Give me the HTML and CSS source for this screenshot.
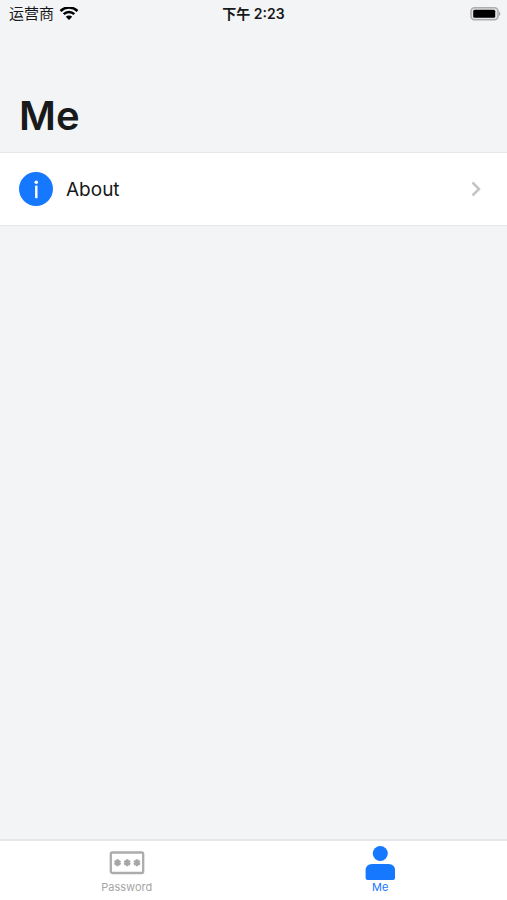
FILE: index.html
```html
<!DOCTYPE html>
<html lang="en">
<head>
<meta charset="utf-8">
<meta name="viewport" content="width=device-width, initial-scale=1">
<title>Me</title>
<link rel="stylesheet" href="styles.css">
</head>
<body>
<div class="app">
  <header class="status">
    <div class="carrier">
      <span lang="zh">运营商</span>
      <svg class="wifi" width="20" height="14" viewBox="0 0 20 14" aria-hidden="true">
        <path d="M1.5 4a12.2 12.2 0 0 1 17 0M4.7 7.2a7.6 7.6 0 0 1 10.6 0" fill="none" stroke="#000" stroke-width="2.5"/>
        <path d="M10 13 6.8 9.8a4.6 4.6 0 0 1 6.4 0z"/>
      </svg>
    </div>
    <time class="clock" lang="zh">下午 2:23</time>
    <svg class="battery" width="32" height="14" viewBox="0 0 32 14" aria-hidden="true">
      <rect x="1" y="0.800" width="27" height="12" rx="3.5" fill="#e4e4e5" stroke="#adadae" stroke-width="1.5"/>
      <rect x="3.200" y="2.800" width="22" height="8" rx="1.5"/>
      <path d="M29 4.300q2.500 2.500 0 5z" fill="#a2a2a3"/>
    </svg>
  </header>
  <main class="content">
    <h1 class="title">Me</h1>
    <a class="row" href="#about">
      <svg class="info" width="34" height="34" viewBox="0 0 34 34" aria-hidden="true">
        <circle cx="17" cy="17" r="17" fill="#1677ff"/>
        <circle cx="17.3" cy="10.3" r="1.8" fill="#fff"/>
        <path d="M17.3 13.6v12.600" stroke="#fff" stroke-width="2.4"/>
      </svg>
      <span class="label">About</span>
      <svg class="chevron" width="10" height="16" viewBox="0 0 10 16" aria-hidden="true">
        <path d="M1.5 1.5 8 8l-6.5 6.5" fill="none" stroke="#c4c4c6" stroke-width="2.5"/>
      </svg>
    </a>
  </main>
  <nav class="tabs">
    <a class="tab" href="#password">
      <svg width="36" height="36" viewBox="0 0 36 36" aria-hidden="true">
        <rect x="1.8" y="8.5" width="32.4" height="20.5" rx="1.5" fill="none" stroke="#acacac" stroke-width="2.3"/>
        <g stroke="#a6a6a6" stroke-width="2.5">
          <path id="star" d="M8.5 15.3v7M5.5 17l6 3.5M5.5 20.5l6-3.500"/>
          <use href="#star" x="9.7"/>
          <use href="#star" x="19.4"/>
        </g>
      </svg>
      <span>Password</span>
    </a>
    <a class="tab active" href="#me" aria-current="page">
      <svg width="36" height="36" viewBox="0 0 36 36" aria-hidden="true">
        <circle cx="18.3" cy="9.500" r="7.500"/>
        <path d="M3.6 34v-7.500q0-6.500 6.500-6.500h16.400q6.500 0 6.500 6.500V34q0 2-2 2H5.600q-2 0-2-2z"/>
      </svg>
      <span>Me</span>
    </a>
  </nav>
</div>
</body>
</html>
```
FILE: styles.css
```css
* {
  box-sizing: border-box;
}

body {
  margin: 0;
  background: #f3f4f6;
  color: #18191a;
  font-family: Inter, "Noto Sans CJK SC", sans-serif;
}

a {
  color: inherit;
  text-decoration: none;
}

svg {
  display: block;
  flex-shrink: 0;
}

.app {
  display: flex;
  flex-direction: column;
  min-height: 100vh;
}

.status {
  display: grid;
  grid-template-columns: 1fr auto 1fr;
  align-items: center;
  height: 28px;
  padding: 0 5px;
  font-size: 15px;
  line-height: 20px;
}

.carrier {
  display: flex;
  align-items: center;
  gap: 5px;
  padding-left: 4px;
}

.clock {
  font-size: 14px;
  font-weight: 600;
}

.battery {
  justify-self: end;
}

.content {
  flex: 1;
}

.title {
  margin: 0;
  padding: 64px 19px 12px;
  font-size: 40px;
  font-weight: 600;
  line-height: 48px;
}

.row {
  display: flex;
  align-items: center;
  gap: 13px;
  height: 74px;
  padding: 0 26px 0 19px;
  border: solid #e5e6e7;
  border-width: 1px 0;
  background: #fff;
}

.label {
  flex: 1;
  padding-top: 2px;
  font-size: 19px;
  line-height: 28px;
}

.tabs {
  display: flex;
  height: 61px;
  border-top: 2px solid #e6e7e8;
  background: #fff;
}

.tab {
  flex: 1;
  display: flex;
  flex-direction: column;
  align-items: center;
  padding-top: 3px;
  color: #a5a5a5;
  font-size: 11px;
  line-height: 14px;
}

.active {
  color: #1677ff;
}

.active svg {
  fill: currentColor;
}
```
